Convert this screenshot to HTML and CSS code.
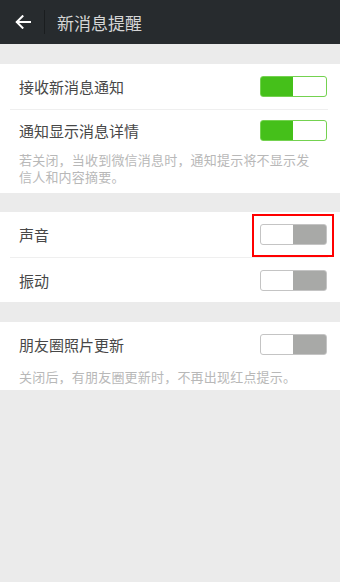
FILE: index.html
```html
<!DOCTYPE html>
<html lang="zh-CN">
<head>
    <meta charset="UTF-8">
    <meta name="viewport" content="width=device-width, initial-scale=1.0">
    <title>新消息提醒</title>
    <link rel="stylesheet" href="styles.css">
</head>
<body>
    <div class="top-bar">
        <button class="back-btn" aria-label="返回">
            <svg width="16" height="14" viewBox="0 0 16 14">
                <path d="M15 7H2M7.5 1.2L1.7 7l5.8 5.8" fill="none" stroke="#fff" stroke-width="2" stroke-linecap="square"/>
            </svg>
        </button>
        <span class="bar-divider"></span>
        <h1 class="bar-title">新消息提醒</h1>
    </div>

    <div class="settings-group">
        <div class="setting-row">
            <span>接收新消息通知</span>
            <span class="switch on"></span>
        </div>
        <div class="row-line"></div>
        <div class="setting-row short">
            <span>通知显示消息详情</span>
            <span class="switch on"></span>
        </div>
        <p class="hint first-hint">若关闭，当收到微信消息时，通知提示将不显示发信人和内容摘要。</p>
    </div>

    <div class="settings-group">
        <div class="setting-row">
            <span>声音</span>
            <span class="switch"></span>
            <span class="highlight-box"></span>
        </div>
        <div class="row-line"></div>
        <div class="setting-row tall">
            <span>振动</span>
            <span class="switch"></span>
        </div>
    </div>

    <div class="settings-group">
        <div class="setting-row tall">
            <span>朋友圈照片更新</span>
            <span class="switch"></span>
        </div>
        <p class="hint last-hint">关闭后，有朋友圈更新时，不再出现红点提示。</p>
    </div>
</body>
</html>
```

FILE: styles.css
```css
:root {
    --bar-color: #272b2e;
    --page-bg: #ebebeb;
    --green: #45c01a;
    --green-edge: #74d250;
    --gray-off: #a8a9a7;
}

* {
    margin: 0;
    padding: 0;
    box-sizing: border-box;
}

body {
    font-family: "Noto Sans CJK SC", "Noto Sans", sans-serif;
    background-color: var(--page-bg);
    color: #474747;
    width: 340px;
    height: 582px;
    overflow: hidden;
}

.top-bar {
    height: 44px;
    background-color: var(--bar-color);
    display: flex;
    align-items: center;
}

.back-btn {
    background: none;
    border: none;
    width: 44px;
    height: 44px;
    display: flex;
    align-items: center;
    justify-content: center;
    padding-left: 1px;
}

.bar-divider {
    width: 1px;
    height: 24px;
    background-color: #1a1d1f;
}

.bar-title {
    font-size: 17px;
    font-weight: normal;
    color: #d6d6d6;
    margin-left: 12px;
}

.settings-group {
    background-color: white;
    margin-top: 20px;
}

.settings-group + .settings-group {
    margin-top: 19px;
}

.settings-group:last-child {
    margin-top: 20px;
}

.setting-row {
    position: relative;
    height: 45px;
    display: flex;
    align-items: center;
    justify-content: space-between;
    padding: 0 13px 0 19px;
    font-size: 15px;
}

.setting-row.short {
    height: 41px;
}

.setting-row.tall {
    height: 44px;
}

.row-line {
    height: 1px;
    margin: 0 12px 0 10px;
    background-color: #efefef;
}

.switch {
    width: 67px;
    height: 21px;
    border: 1px solid #c4c4c4;
    border-radius: 3px;
    background: linear-gradient(to right, #fff 50%, var(--gray-off) 50%);
}

.switch.on {
    border-color: var(--green-edge);
    background: linear-gradient(to right, var(--green) 50%, #fff 50%);
}

.highlight-box {
    position: absolute;
    left: 252px;
    top: 2px;
    width: 82px;
    height: 43px;
    border: 2px solid #f00;
}

.hint {
    font-size: 13px;
    line-height: 17px;
    color: #b8b8b8;
    padding: 0 30px 0 19px;
    letter-spacing: 0.2px;
}

.first-hint {
    padding-bottom: 8px;
}

.last-hint {
    padding-top: 2px;
    padding-bottom: 5px;
}
```
